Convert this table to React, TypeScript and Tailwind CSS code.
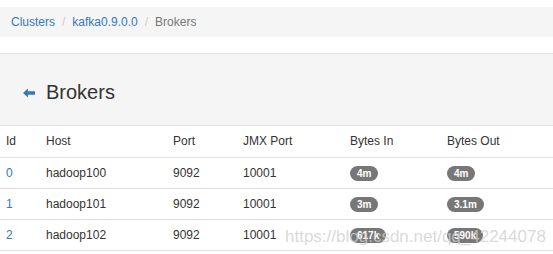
import React from 'react';

const brokers = [
  { id: 0, host: 'hadoop100', port: 9092, jmx: 10001, bytesIn: '4m', bytesOut: '4m' },
  { id: 1, host: 'hadoop101', port: 9092, jmx: 10001, bytesIn: '3m', bytesOut: '3.1m' },
  { id: 2, host: 'hadoop102', port: 9092, jmx: 10001, bytesIn: '617k', bytesOut: '590k' }
];

function Badge({ children }: { children: React.ReactNode }) {
  return (
    <span className="inline-block bg-[#777] text-white font-bold text-[10px] leading-[15px] px-[7px] rounded-full">
      {children}
    </span>
  );
}

export default function App() {
  return (
    <div className="relative w-[553px] h-[254px] bg-white overflow-hidden text-[12px] text-[#333] font-['Liberation_Sans',Arial,sans-serif]">
      {/* Breadcrumb */}
      <div className="mt-[7px] h-[30px] bg-[#f5f5f5] flex items-center px-[11px]">
        <a className="text-[#337ab7]">Clusters</a>
        <span className="text-[#ccc] px-[7px]">/</span>
        <a className="text-[#337ab7]">kafka0.9.0.0</a>
        <span className="text-[#ccc] px-[7px]">/</span>
        <span className="text-[#777]">Brokers</span>
      </div>

      {/* Page header */}
      <div className="mt-[16px] h-[73px] bg-[#f5f5f5] border-y border-[#e3e3e3] flex items-center pl-[23px] pt-[5px]">
        <svg width="12" height="10" viewBox="0 0 12 10" className="mr-[11px] mt-[2px]">
          <path d="M0 5 L5 0.5 L5 3.3 L12 3.3 L12 6.7 L5 6.7 L5 9.5 Z" fill="#337ab7" />
        </svg>
        <h3 className="text-[20px] text-[#333] leading-none">Brokers</h3>
      </div>

      {/* Table */}
      <table className="w-full text-left border-collapse table-fixed">
        <thead>
          <tr className="h-[31px] border-b border-[#ddd]">
            <th className="font-normal pl-[6px] w-[46px]">Id</th>
            <th className="font-normal w-[127px]">Host</th>
            <th className="font-normal w-[70px]">Port</th>
            <th className="font-normal w-[107px]">JMX Port</th>
            <th className="font-normal w-[97px]">Bytes In</th>
            <th className="font-normal">Bytes Out</th>
          </tr>
        </thead>
        <tbody>
          {brokers.map(b => (
            <tr key={b.id} className="h-[31px] border-b border-[#ddd]">
              <td className="pl-[6px] text-[#337ab7]">{b.id}</td>
              <td>{b.host}</td>
              <td>{b.port}</td>
              <td>{b.jmx}</td>
              <td><Badge>{b.bytesIn}</Badge></td>
              <td><Badge>{b.bytesOut}</Badge></td>
            </tr>
          ))}
        </tbody>
      </table>

      {/* Watermark */}
      <div className="absolute left-[285px] top-[224px] text-[17px] text-[#cfcfcf]/80 whitespace-nowrap pointer-events-none">
        https://blog.csdn.net/qq_42244078
      </div>
    </div>
  );
}
